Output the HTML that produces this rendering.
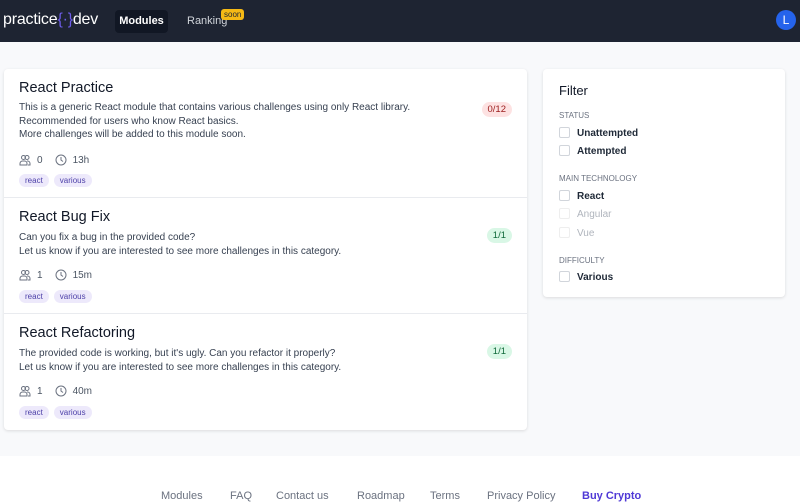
<!DOCTYPE html>
<html><head><meta charset="utf-8"><style>
*{box-sizing:border-box;margin:0;padding:0}
body{width:800px;height:500px;overflow:hidden;font-family:"Liberation Sans",sans-serif;background:#fff;color:#111827}
.hdr{position:absolute;left:0;top:0;width:800px;height:42px;background:#1e2432}
.logo{position:absolute;left:3px;top:11px;color:#fff;font-size:16px;letter-spacing:-0.2px}
.logo b{color:#6d5ce8;font-weight:normal}
.nav1{position:absolute;left:115px;top:10px;width:53px;height:23px;background:#111724;border-radius:4px;color:#fff;font-size:11px;font-weight:bold;text-align:center;line-height:23px}
.nav2{position:absolute;left:187px;top:15px;color:#d1d5db;font-size:11px}
.soon{position:absolute;left:221px;top:9px;background:#f5b915;color:#1e2432;font-size:8px;padding:1px 3px;border-radius:3px}
.av{position:absolute;left:776px;top:10px;width:20px;height:20px;border-radius:50%;background:#2563eb;color:#fff;font-size:12px;text-align:center;line-height:20px}
.bg{position:absolute;left:0;top:42px;width:800px;height:414px;background:#f8f9fb}
.card{position:absolute;background:#fff;border-radius:4px;box-shadow:0 1px 3px rgba(0,0,0,.12)}
.mod{position:absolute;left:0;width:523px;border-bottom:1px solid #e9ebef;padding:0 15px}
.mod h2{position:absolute;left:15px;font-size:14.5px;font-weight:normal;color:#111827}
.mod p{position:absolute;left:15px;font-size:10px;line-height:13.5px;color:#374151}
.meta{position:absolute;left:15px;font-size:10px;color:#4b5563;display:flex;align-items:center}
.meta svg{margin-right:6px}
.tags{position:absolute;left:15px;display:flex;gap:5px}
.tag{background:#ede9fb;color:#4c3fa8;font-size:8px;padding:2px 6px;border-radius:8px}
.badge{position:absolute;right:15px;font-size:9.5px;padding:2px 6px;border-radius:8px}
.red{background:#fde2e2;color:#9b1c1c}.grn{background:#d9f7e6;color:#116a3b}
.cb{position:absolute;left:16px;width:11px;height:11px;border:1px solid #d1d5db;border-radius:2px}
.lbl{position:absolute;left:34px;font-size:10px;color:#1f2937;font-weight:bold;margin-top:1px}
.sec{position:absolute;left:16px;font-size:8px;color:#6b7280}
.foot{position:absolute;top:490px;left:0;width:800px;font-size:11px;color:#6b7280}
.foot span{position:absolute}
</style></head><body>
<div class="hdr">
<div class="logo">practice<b>{·}</b>dev</div>
<div class="nav1">Modules</div>
<div class="nav2">Ranking</div><div class="soon">soon</div>
<div class="av">L</div>
</div>
<div class="bg"></div>
<div class="card" style="left:4px;top:69px;width:523px;height:361px">
 <div class="mod" style="top:0;height:129px">
  <h2 style="top:11px">React Practice</h2>
  <div class="badge red" style="top:33px">0/12</div>
  <p style="top:32px">This is a generic React module that contains various challenges using only React library.<br>Recommended for users who know React basics.<br>More challenges will be added to this module soon.</p>
  <div class="meta" style="top:85px"><svg width="12" height="12" viewBox="0 0 12 12" fill="none" stroke="#6b7280" stroke-width="1"><circle cx="4.5" cy="3.5" r="2"/><circle cx="8" cy="3.5" r="2"/><path d="M1 11v-1.5a2.5 2.5 0 0 1 2.5-2.5h2A2.5 2.5 0 0 1 8 9.5V11zM8 7h.5A2.5 2.5 0 0 1 11 9.5V11H9"/></svg>0<span style="width:12px"></span><svg width="12" height="12" viewBox="0 0 12 12" fill="none" stroke="#6b7280" stroke-width="1"><circle cx="6" cy="6" r="5"/><path d="M6 3v3l2 1.5"/></svg>13h</div>
  <div class="tags" style="top:105px"><span class="tag">react</span><span class="tag">various</span></div>
 </div>
 <div class="mod" style="top:129px;height:116px">
  <h2 style="top:11px">React Bug Fix</h2>
  <div class="badge grn" style="top:30px">1/1</div>
  <p style="top:33px">Can you fix a bug in the provided code?<br>Let us know if you are interested to see more challenges in this category.</p>
  <div class="meta" style="top:71px"><svg width="12" height="12" viewBox="0 0 12 12" fill="none" stroke="#6b7280" stroke-width="1"><circle cx="4.5" cy="3.5" r="2"/><circle cx="8" cy="3.5" r="2"/><path d="M1 11v-1.5a2.5 2.5 0 0 1 2.5-2.5h2A2.5 2.5 0 0 1 8 9.5V11zM8 7h.5A2.5 2.5 0 0 1 11 9.5V11H9"/></svg>1<span style="width:12px"></span><svg width="12" height="12" viewBox="0 0 12 12" fill="none" stroke="#6b7280" stroke-width="1"><circle cx="6" cy="6" r="5"/><path d="M6 3v3l2 1.5"/></svg>15m</div>
  <div class="tags" style="top:92px"><span class="tag">react</span><span class="tag">various</span></div>
 </div>
 <div class="mod" style="top:245px;height:116px;border:none">
  <h2 style="top:11px">React Refactoring</h2>
  <div class="badge grn" style="top:30px">1/1</div>
  <p style="top:33px">The provided code is working, but it's ugly. Can you refactor it properly?<br>Let us know if you are interested to see more challenges in this category.</p>
  <div class="meta" style="top:71px"><svg width="12" height="12" viewBox="0 0 12 12" fill="none" stroke="#6b7280" stroke-width="1"><circle cx="4.5" cy="3.5" r="2"/><circle cx="8" cy="3.5" r="2"/><path d="M1 11v-1.5a2.5 2.5 0 0 1 2.5-2.5h2A2.5 2.5 0 0 1 8 9.5V11zM8 7h.5A2.5 2.5 0 0 1 11 9.5V11H9"/></svg>1<span style="width:12px"></span><svg width="12" height="12" viewBox="0 0 12 12" fill="none" stroke="#6b7280" stroke-width="1"><circle cx="6" cy="6" r="5"/><path d="M6 3v3l2 1.5"/></svg>40m</div>
  <div class="tags" style="top:92px"><span class="tag">react</span><span class="tag">various</span></div>
 </div>
</div>
<div class="card" style="left:543px;top:69px;width:242px;height:228px">
 <div style="position:absolute;left:16px;top:14px;font-size:13px">Filter</div>
 <div class="sec" style="top:42px">STATUS</div>
 <div class="cb" style="top:58px"></div><div class="lbl" style="top:58px">Unattempted</div>
 <div class="cb" style="top:76px"></div><div class="lbl" style="top:76px">Attempted</div>
 <div class="sec" style="top:105px">MAIN TECHNOLOGY</div>
 <div class="cb" style="top:121px"></div><div class="lbl" style="top:121px">React</div>
 <div class="cb" style="top:139px;border-color:#eee"></div><div class="lbl" style="top:139px;color:#b0b5bd;font-weight:normal">Angular</div>
 <div class="cb" style="top:158px;border-color:#eee"></div><div class="lbl" style="top:158px;color:#b0b5bd;font-weight:normal">Vue</div>
 <div class="sec" style="top:187px">DIFFICULTY</div>
 <div class="cb" style="top:202px"></div><div class="lbl" style="top:202px">Various</div>
</div>
<div class="foot">
<span style="left:161px">Modules</span><span style="left:230px">FAQ</span><span style="left:276px">Contact us</span><span style="left:357px">Roadmap</span><span style="left:430px">Terms</span><span style="left:487px">Privacy Policy</span><span style="left:582px;color:#4f39d6;font-weight:bold">Buy Crypto</span>
</div>
</body></html>
